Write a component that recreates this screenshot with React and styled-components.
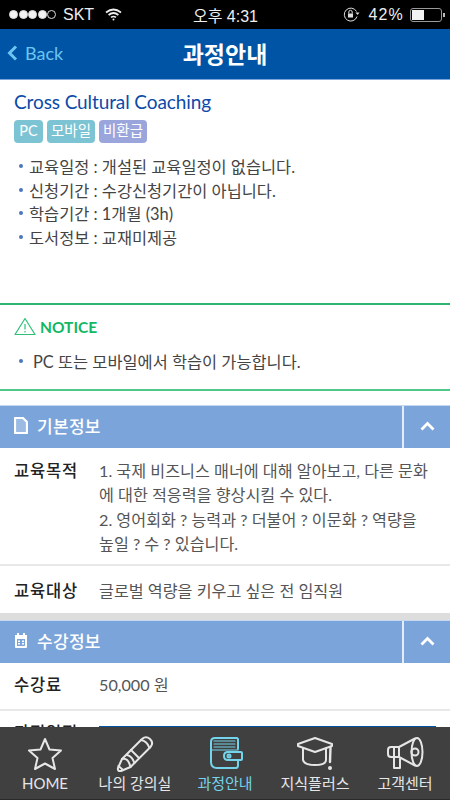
import React from "react";
import styled, { createGlobalStyle } from "styled-components";

const GlobalStyle = createGlobalStyle`
  html, body {
    margin: 0;
    padding: 0;
    background: #fff;
  }
  body {
    font-family: "Lato", "Noto Sans CJK KR", sans-serif;
  }
  * {
    box-sizing: border-box;
  }
`;

const Screen = styled.div`
  position: relative;
  width: 450px;
  height: 800px;
  overflow: hidden;
  background: #fff;
`;

const StatusBar = styled.div`
  height: 29px;
  background: #000;
  color: #eee;
  display: grid;
  grid-template-columns: 1fr auto 1fr;
  align-items: center;
  padding: 0 8px 0 9px;
  font-family: "Liberation Sans", "Noto Sans CJK KR", sans-serif;
  font-size: 16px;
`;

const StatusLeft = styled.div`
  display: flex;
  align-items: center;
`;

const StatusRight = styled.div`
  display: flex;
  align-items: center;
  justify-content: flex-end;
`;

const Dot = styled.span`
  width: 9px;
  height: 9px;
  margin-right: 0.6px;
  border-radius: 50%;
  background: ${(p) => (p.$empty ? "transparent" : "#f2f2f2")};
  border: 1px solid #ddd;
`;

const Carrier = styled.span`
  margin-left: 6px;
  margin-right: 11px;
`;

const Percent = styled.span`
  margin: 0 6px 0 8px;
  letter-spacing: 1.2px;
`;

const Battery = styled.div`
  position: relative;
  width: 32px;
  height: 14px;
  border: 1px solid #999;
  border-radius: 3px;
  padding: 1px;
  &::after {
    content: "";
    position: absolute;
    right: -4px;
    top: 4px;
    width: 2px;
    height: 4px;
    background: #bbb;
  }
`;

const BatteryFill = styled.div`
  height: 100%;
  background: #f2f2f2;
`;

const Header = styled.header`
  height: 51px;
  background: #0054a6;
  border-bottom: 1px solid #7ba5da;
  display: grid;
  grid-template-columns: 1fr auto 1fr;
  align-items: center;
  padding: 0 7px 2px;
`;

const BackLink = styled.div`
  display: flex;
  align-items: center;
  gap: 7px;
  color: #6cc5f0;
  font-size: 18px;
`;

const HeaderTitle = styled.h1`
  margin: 0;
  color: #fff;
  font-size: 23px;
  font-weight: 700;
`;

const Summary = styled.section`
  padding: 9px 14px 0;
  height: 225px;
  border-bottom: 2px solid #2fb56f;
`;

const CourseTitle = styled.h2`
  margin: 0;
  color: #0b4aa8;
  font-size: 19px;
  font-weight: 400;
  letter-spacing: -0.1px;
  line-height: 26px;
`;

const BadgeRow = styled.div`
  display: flex;
  gap: 4px;
  margin-top: 5px;
`;

const Badge = styled.span`
  min-width: 29px;
  height: 23px;
  padding: 0 4px;
  border-radius: 4px;
  background: ${(p) => p.$bg};
  color: #fff;
  font-size: 14.5px;
  line-height: 22px;
  text-align: center;
`;

const BulletList = styled.ul`
  list-style: none;
  margin: ${(p) => p.$margin || "11px 0 0"};
  padding: 0 0 0 5px;
`;

const BulletItem = styled.li`
  display: flex;
  align-items: center;
  gap: ${(p) => p.$gap || "6px"};
  height: 23.7px;
  color: #444;
  font-size: 16.4px;
  white-space: nowrap;
  &::before {
    content: "";
    width: 4px;
    height: 4px;
    border-radius: 50%;
    background: #4a78bd;
  }
`;

const Notice = styled.section`
  height: 86px;
  padding: 12px 14px 0;
  border-bottom: 2px solid #4ec98a;
`;

const NoticeHead = styled.div`
  display: flex;
  align-items: center;
  gap: 4px;
  color: #12b765;
  font-size: 15.5px;
  font-weight: 700;
`;

const SectionHead = styled.div`
  display: flex;
  align-items: stretch;
  height: 43px;
  margin-top: ${(p) => p.$top || 0}px;
  background: #7ba5da;
  border-top: 1px solid #c6d8ef;
  color: #fff;
`;

const SectionTitle = styled.div`
  flex: 1;
  display: flex;
  align-items: center;
  gap: 9px;
  padding: 0 0 3px 14px;
  font-size: 17px;
  font-weight: 500;
  letter-spacing: 0.3px;
`;

const Toggle = styled.div`
  width: 48px;
  display: flex;
  align-items: center;
  justify-content: center;
  padding-bottom: 2px;
  border-left: 2px solid #e4ecf7;
`;

const InfoRow = styled.div`
  display: grid;
  grid-template-columns: 85px 1fr;
  padding: ${(p) => p.$pad};
  border-bottom: ${(p) => (p.$plain ? "none" : "2px solid #e8e8e8")};
`;

const InfoLabel = styled.div`
  color: #222;
  font-size: 16.5px;
  font-weight: 500;
  letter-spacing: 0.8px;
  line-height: 24.3px;
`;

const InfoValue = styled.div`
  padding-right: 2px;
  color: #555;
  font-size: 16.2px;
  line-height: 24.3px;
  word-break: break-all;
`;

const GreyBand = styled.div`
  height: 7px;
  margin-top: 10px;
  background: #ddd;
`;

const ScheduleTable = styled.div`
  display: grid;
  grid-template-columns: 101px 101px 1fr;
  height: 30px;
  margin-top: 5px;
  border-top: 2px solid #0054a6;
  background: #eef3fa;
`;

const ScheduleCell = styled.div`
  border-left: 1px solid #aaa;
`;

const TabBar = styled.nav`
  position: absolute;
  left: 0;
  right: 0;
  bottom: 0;
  height: 73px;
  display: grid;
  grid-template-columns: repeat(5, 90px);
  background: #404040;
  border-bottom: 1px solid #2a2a2a;
`;

const Tab = styled.div`
  display: flex;
  flex-direction: column;
  align-items: center;
  padding-top: 8px;
  color: ${(p) => (p.$active ? "#74d4ec" : "#e6e6e6")};
  font-size: 15px;
`;

const TabIcon = styled.svg`
  width: 38px;
  height: 38px;
  fill: none;
  stroke: currentColor;
  stroke-width: 2;
  stroke-linejoin: round;
  stroke-linecap: round;
`;

const TabLabel = styled.span`
  line-height: 20px;
  white-space: nowrap;
`;

const Star = () => (
  <TabIcon viewBox="0 0 38 38">
    <path d="M19 4 L23.5 14.5 L35 15.5 L26.5 23 L29 34 L19 28.5 L9 34 L11.5 23 L3 15.5 L14.5 14.5 Z" />
  </TabIcon>
);

const Pencil = () => (
  <TabIcon viewBox="0 0 38 38">
    <path d="M5 36 L3 36 Q1.5 35.5 2 33 L6 24 L26 4 Q30 0.5 34 4 Q38 8 34.5 12 L14.5 32 Z" />
    <path d="M6 24 Q12 22 14.5 32 M11 20 Q16 21 18.5 28 M15 15 L23 23 M25 5 Q31 6 33.5 13 M2.5 31 L7 35" />
  </TabIcon>
);

const Wallet = () => (
  <TabIcon viewBox="0 0 38 38">
    <path d="M5 7 Q5 3 9 3 L31 3 L32 4 L32 14 M5 7 L5 27 Q5 33 11 33 L30 33 Q32 33 32 30 L32 26" />
    <path d="M8 6 L29 6 M8 9 L29 9 M8 12 L29 12 M5 15 L32 15" strokeWidth="1.2" />
    <path d="M22 17 L35 17 Q36 17 36 18 L36 24 Q36 25 35 25 L22 25 Q18 25 18 21 Q18 17 22 17 Z" />
    <circle cx="23" cy="21" r="1.5" />
  </TabIcon>
);

const Cap = () => (
  <TabIcon viewBox="0 0 38 38">
    <path d="M19 3 L36 9 L36 11 L19 17 L2 11 L2 9 Z" />
    <path d="M7 13 L7 25 Q8 30 19 30 Q30 30 30 25 L30 13" />
    <path d="M34.5 12 L34 27" strokeWidth="2.4" />
    <circle cx="34" cy="33" r="2" fill="currentColor" stroke="none" />
  </TabIcon>
);

const Megaphone = () => (
  <TabIcon viewBox="0 0 38 38">
    <ellipse cx="31" cy="17" rx="5.5" ry="14" />
    <path d="M29 3.5 L13 12 L5 12 Q2 12 2 15 L2 19 Q2 22 5 22 L13 22 L29 30.5" />
    <path d="M8 12 L8 22 M13 12 L13 22 M8 22 L8 33 L14 33 L14 24" />
    <circle cx="29" cy="17" r="3.5" />
  </TabIcon>
);

function App() {
  return (
    <Screen>
      <GlobalStyle />
      <StatusBar>
        <StatusLeft>
          <Dot />
          <Dot />
          <Dot />
          <Dot />
          <Dot $empty />
          <Carrier>SKT</Carrier>
          <svg width="17" height="13" viewBox="0 0 17 13" fill="none" stroke="#eee" strokeWidth="1.7">
            <path d="M1 4.5 Q8.5 -1.5 16 4.5" />
            <path d="M3.6 7 Q8.5 3 13.4 7" />
            <path d="M6 9.4 Q8.5 7.6 11 9.4" />
            <circle cx="8.5" cy="11.5" r="1" fill="#eee" stroke="none" />
          </svg>
        </StatusLeft>
        <span>오후 4:31</span>
        <StatusRight>
          <svg width="17" height="15" viewBox="0 0 17 15" fill="none" stroke="#ddd" strokeWidth="1">
            <path d="M14 9.5 A6.5 6.5 0 1 1 13.5 4.5" />
            <path d="M12.5 5.5 L16.5 5.5 L14.5 8 Z" fill="#ddd" stroke="none" />
            <rect x="5" y="6.5" width="5" height="4" fill="#ddd" stroke="none" />
            <path d="M5.8 6.5 V5 A1.7 1.7 0 0 1 9.2 5 V6.5" />
          </svg>
          <Percent>42%</Percent>
          <Battery>
            <BatteryFill style={{ width: "42%" }} />
          </Battery>
        </StatusRight>
      </StatusBar>

      <Header>
        <BackLink>
          <svg width="11" height="16" viewBox="0 0 11 16" fill="none" stroke="#6cc5f0" strokeWidth="3">
            <path d="M9 1.5 L2.5 8 L9 14.5" />
          </svg>
          Back
        </BackLink>
        <HeaderTitle>과정안내</HeaderTitle>
      </Header>

      <Summary>
        <CourseTitle>Cross Cultural Coaching</CourseTitle>
        <BadgeRow>
          <Badge $bg="#7cc3d3">PC</Badge>
          <Badge $bg="#7cc3d3">모바일</Badge>
          <Badge $bg="#9aa5dc">비환급</Badge>
        </BadgeRow>
        <BulletList>
          <BulletItem>교육일정 : 개설된 교육일정이 없습니다.</BulletItem>
          <BulletItem>신청기간 : 수강신청기간이 아닙니다.</BulletItem>
          <BulletItem>학습기간 : 1개월 (3h)</BulletItem>
          <BulletItem>도서정보 : 교재미제공</BulletItem>
        </BulletList>
      </Summary>

      <Notice>
        <NoticeHead>
          <svg width="22" height="19" viewBox="0 0 22 19" fill="none" stroke="#2fc07a" strokeWidth="1.2" strokeLinejoin="round">
            <path d="M11 1.5 L21 17.5 L1 17.5 Z" />
            <path d="M11 7 L11 12.5 M11 14 L11 15.5" />
          </svg>
          NOTICE
        </NoticeHead>
        <BulletList $margin="13px 0 0">
          <BulletItem $gap="10px">PC 또는 모바일에서 학습이 가능합니다.</BulletItem>
        </BulletList>
      </Notice>

      <SectionHead $top={14}>
        <SectionTitle>
          <svg width="14" height="17" viewBox="0 0 14 17" fill="#fff" fillOpacity="0.25" stroke="#fff" strokeWidth="2.2" strokeLinejoin="round">
            <path d="M1 1 L9 1 L13 5 L13 16 L1 16 Z" />
          </svg>
          기본정보
        </SectionTitle>
        <Toggle>
          <svg width="15" height="10" viewBox="0 0 15 10" fill="none" stroke="#fff" strokeWidth="2.8">
            <path d="M1.5 8.5 L7.5 2.5 L13.5 8.5" />
          </svg>
        </Toggle>
      </SectionHead>
      <InfoRow $pad="11px 14px 8px">
        <InfoLabel>교육목적</InfoLabel>
        <InfoValue>
          1. 국제 비즈니스 매너에 대해 알아보고, 다른 문화에 대한 적응력을 향상시킬 수 있다.
          <br />
          2. 영어회화 ? 능력과 ? 더불어 ? 이문화 ? 역량을 높일 ? 수 ? 있습니다.
        </InfoValue>
      </InfoRow>
      <InfoRow $plain $pad="13px 14px 0">
        <InfoLabel>교육대상</InfoLabel>
        <InfoValue>글로벌 역량을 키우고 싶은 전 임직원</InfoValue>
      </InfoRow>
      <GreyBand />
      <SectionHead>
        <SectionTitle>
          <svg width="14" height="15" viewBox="0 0 14 15" fill="#fff" stroke="none">
            <path d="M1 2 H13 V14 Q13 15 12 15 H2 Q1 15 1 14 Z M3 6 V13 H11 V6 Z" fillRule="evenodd" />
            <path d="M3 0 H5 V3 H3 Z M9 0 H11 V3 H9 Z M4 7.5 H6 V9 H4 Z M8 7.5 H10 V9 H8 Z M4 10 H6 V11.5 H4 Z M8 10 H10 V11.5 H8 Z" />
          </svg>
          수강정보
        </SectionTitle>
        <Toggle>
          <svg width="15" height="10" viewBox="0 0 15 10" fill="none" stroke="#fff" strokeWidth="2.8">
            <path d="M1.5 8.5 L7.5 2.5 L13.5 8.5" />
          </svg>
        </Toggle>
      </SectionHead>
      <InfoRow $pad="10px 14px 11px">
        <InfoLabel>수강료</InfoLabel>
        <InfoValue>50,000 원</InfoValue>
      </InfoRow>
      <InfoRow $plain $pad="10px 14px 0">
        <InfoLabel>과정일정</InfoLabel>
        <ScheduleTable>
          <ScheduleCell />
          <ScheduleCell />
          <ScheduleCell />
        </ScheduleTable>
      </InfoRow>

      <TabBar>
        <Tab>
          <Star />
          <TabLabel>HOME</TabLabel>
        </Tab>
        <Tab>
          <Pencil />
          <TabLabel>나의 강의실</TabLabel>
        </Tab>
        <Tab $active>
          <Wallet />
          <TabLabel>과정안내</TabLabel>
        </Tab>
        <Tab>
          <Cap />
          <TabLabel>지식플러스</TabLabel>
        </Tab>
        <Tab>
          <Megaphone />
          <TabLabel>고객센터</TabLabel>
        </Tab>
      </TabBar>
    </Screen>
  );
}

export default App;
